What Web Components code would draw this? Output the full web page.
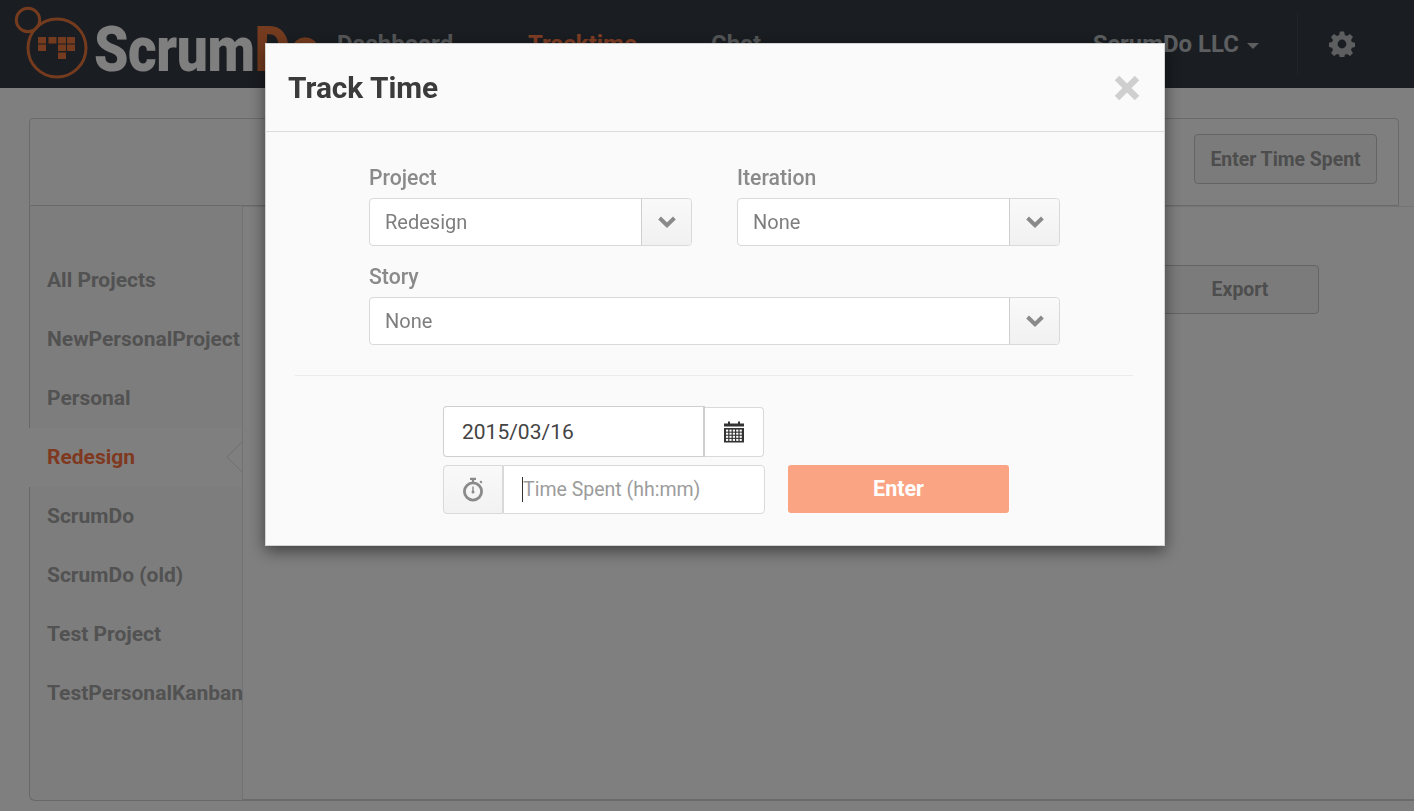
<!DOCTYPE html>
<html lang="en"><head><meta charset="utf-8"><title>ScrumDo Track Time</title>
<style>
html,body{margin:0;padding:0;height:100%;overflow:hidden;background:#fff;font-family:Roboto,"Liberation Sans",sans-serif}
</style></head><body>
<sd-app>
  <sd-header></sd-header>
  <sd-page>
    <sd-toolbar><sd-button style="--w:183px;--h:50px">Enter Time Spent</sd-button></sd-toolbar>
    <sd-split>
      <sd-sidebar></sd-sidebar>
      <sd-main><sd-button style="--w:158px;--h:49px">Export</sd-button></sd-main>
    </sd-split>
  </sd-page>
</sd-app>
<sd-modal></sd-modal>
<script>
function def(name, html){
  customElements.define(name, class extends HTMLElement{
    constructor(){super();this.attachShadow({mode:'open'}).innerHTML=html;}
  });
}
const chev='<svg width="20" height="14" viewBox="0 0 20 14"><path d="M2.6 3 10 10.2 17.4 3" fill="none" stroke="currentColor" stroke-width="4"/></svg>';
const blocks=[[24,33],[34.5,33],[44,33],[53,33],[24,40.5],[44,40.5],[53,40.5],[44,48.5]].map(([x,y])=>`<rect x="${x}" y="${y}" width="8" height="6.5"/>`).join('');
let cells='';
for(let r=0;r<4;r++)for(let c=0;c<5;c++)cells+=`<rect x="${2+c*3.4}" y="${8.6+r*3.1}" width="2.2" height="2"/>`;

def('sd-app',`<style>:host{display:flex;flex-direction:column;height:811px;background:#fff}</style><slot></slot>`);

def('sd-header',`<style>
:host{display:flex;align-items:center;height:88px;background:#343a42;flex:none;font-weight:700;color:#a8abaf;font-size:24px}
.logo{display:flex;align-items:center;flex:none;width:337px;position:relative}
svg.mark{display:block;margin-left:14px;flex:none}
.word{display:inline-block;font-size:63px;line-height:88px;font-weight:900;color:#fff;transform:translateY(6px) scaleX(.875);transform-origin:0 50%;margin-left:4px;white-space:nowrap;letter-spacing:-.5px}
.word b{color:#e8763c;font-weight:900}
nav{display:flex;flex:1}
nav span{display:block}
.n1{width:191px}.n2{width:183px;color:#ff7a48}
.org{margin-left:auto;display:flex;align-items:center;gap:8px;color:#b9bcc0}
.caret{width:0;height:0;border:6px solid transparent;border-top-color:#b9bcc0;border-bottom:0;margin-top:3px}
.div{width:1px;height:60px;background:#454a50;margin-left:38px}
.gear{margin:0 59px 0 31px;display:block;color:#b9bcc0}
</style>
<div class="logo">
<svg class="mark" width="76" height="80" viewBox="0 0 76 80">
 <g fill="none" stroke="#e8763c" stroke-width="3">
  <circle cx="14" cy="16" r="11.7"/>
  <circle cx="43" cy="44" r="29"/>
 </g>
 <g fill="#e8763c">${blocks}</g>
</svg>
<span class="word">Scrum<b>Do</b></span></div>
<nav><span class="n1">Dashboard</span><span class="n2">Tracktime</span><span>Chat</span></nav>
<div class="org">ScrumDo LLC<i class="caret"></i></div>
<div class="div"></div>
<svg class="gear" width="26" height="26" viewBox="0 0 26 26"><path fill="currentColor" fill-rule="evenodd" d="M10.9 0.5h4.2l.7 3.5 2.2.9 3-2 3 3-2 3 .9 2.2 3.5.7v4.2l-3.5.7-.9 2.2 2 3-3 3-3-2-2.2.9-.7 3.5h-4.2l-.7-3.5-2.2-.9-3 2-3-3 2-3-.9-2.2-3.5-.7v-4.2l3.5-.7.9-2.2-2-3 3-3 3 2 2.2-.9zM13 8.6a4.4 4.4 0 1 0 0 8.8 4.4 4.4 0 0 0 0-8.8z"/></svg>`);

def('sd-page',`<style>:host{display:flex;flex-direction:column;flex:1;padding:30px 15px 10px 29px;min-height:0}</style><slot></slot>`);
def('sd-toolbar',`<style>:host{display:flex;align-items:flex-start;justify-content:flex-end;flex:none;border:1px solid #d4d4d4;border-radius:4px 4px 0 0;padding:15px 21px 0 0;box-sizing:content-box;height:71px}</style><slot></slot>`);
def('sd-split',`<style>:host{display:flex;flex:1;min-height:0;margin-right:-15px}</style><slot></slot>`);
def('sd-main',`<style>:host{display:flex;justify-content:flex-end;align-items:flex-start;flex:1;border-top:1px solid #e8e8e8;border-bottom:2px solid #d4d4d4;border-left:1px solid #e4e4e4;padding:58px 95px 0 0}</style><slot></slot>`);
def('sd-button',`<style>:host{display:inline-flex;align-items:center;justify-content:center;width:var(--w);height:var(--h);box-sizing:border-box;border:1px solid #c8c8c8;border-radius:4px;background:#f6f6f6;color:#9a9a9a;font-weight:700;font-size:19.4px;white-space:nowrap}</style><slot></slot>`);

def('sd-sidebar',`<style>
:host{display:block;width:212px;flex:none;border-left:1px solid #cfcfcf;border-bottom:1px solid #cfcfcf;border-radius:0 0 0 6px;padding-top:45px;font-size:21px;font-weight:700;color:#a4a4a4;box-sizing:content-box;background:#fbfbfb}
div{height:59px;line-height:59px;padding-left:17px;white-space:nowrap;position:relative}
.on{color:#ff7342;background:#fff;margin-left:-1px;padding-left:18px}
svg{position:absolute;right:0;top:14px}
</style>
<div>All Projects</div><div>NewPersonalProject</div><div>Personal</div>
<div class="on">Redesign<svg width="16" height="30" viewBox="0 0 16 30"><path d="M16 0 1 15 16 30z" fill="#fff"/><path d="M16 0 1 15 16 30" fill="none" stroke="#e0e0e0"/></svg></div>
<div>ScrumDo</div><div>ScrumDo (old)</div><div>Test Project</div><div>TestPersonalKanban</div>`);

def('sd-select',`<style>
:host{display:flex;height:48px;box-sizing:border-box;border:1px solid #d9d9d9;border-radius:4px;background:#fff;color:#7e7e7e;font-size:20px}
.v{flex:1;line-height:46px;padding-left:15px}
.t{width:49px;flex:none;border-left:1px solid #cfcfcf;display:flex;align-items:center;justify-content:center;color:#8a8a8a;background:linear-gradient(#f9f9f9,#f1f1f1);border-radius:0 4px 4px 0}
svg{display:block}
</style><div class="v"><slot></slot></div><div class="t">${chev}</div>`);

def('sd-modal',`<style>
:host{position:fixed;inset:0;background:rgba(0,0,0,.5);display:block;font-family:Roboto,"Liberation Sans",sans-serif}
.dlg{position:absolute;left:265px;top:43px;width:900px;height:503px;box-sizing:border-box;background:#fafafa;box-shadow:inset 0 0 0 1px #d4d4d4,0 5px 15px rgba(0,0,0,.5);display:flex;flex-direction:column}
.hd{height:87px;flex:none;border-bottom:1px solid #dcdcdc;display:flex;align-items:center;justify-content:space-between;padding:1px 25px 0 23px}
h1{margin:0;font-size:29.8px;font-weight:700;color:#3b3b3b}
.x{display:block}
.bd{padding:33px 105px 0 104px;flex:1}
label{display:block;color:#8a8a8a;font-size:21.2px;font-weight:500;line-height:26px;height:26px;margin-bottom:7px}
.row{display:flex;gap:45px;height:73px}
.row>div{width:323px}
.st{margin-top:26px}
hr{border:0;border-top:1px solid #ebebeb;margin:30px -73px 0 -74px}
.dt{display:flex;margin:30px 0 0 74px;width:321px;height:51px}
.in{flex:1;border:1px solid #cfcfcf;border-right-width:2px;border-radius:4px 0 0 4px;background:#fff;font-size:21px;color:#444;line-height:50px;padding-left:18px;box-sizing:border-box}
.cal{width:59px;height:50px;margin-top:1px;box-sizing:border-box;border:1px solid #d9d9d9;border-left:0;border-radius:0 4px 4px 0;background:#fff;display:flex;align-items:center;justify-content:center}
.tm{display:flex;margin:8px 0 0 74px;align-items:flex-start}
.add{width:60px;height:49px;box-sizing:border-box;border:1px solid #d9d9d9;border-radius:4px 0 0 4px;background:linear-gradient(#f9f9f9,#f2f2f2);display:flex;align-items:center;justify-content:center}
.ph{width:262px;height:49px;box-sizing:border-box;border:1px solid #d9d9d9;border-radius:0 4px 4px 0;background:#fff;color:#9c9c9c;font-size:19.5px;line-height:47px;padding-left:19px;position:relative;white-space:nowrap}
.ph::before{content:"";position:absolute;left:18px;top:11px;width:1px;height:25px;background:#333}
.go{margin-left:23px;width:221px;height:48px;background:#faa484;color:#fff;font-weight:700;font-size:21.5px;text-align:center;line-height:47px;border-radius:3px}
</style>
<div class="dlg">
 <div class="hd"><h1>Track Time</h1>
  <svg class="x" width="26" height="26" viewBox="0 0 26 26"><path d="M3 3 23 23M23 3 3 23" stroke="#cfcfcf" stroke-width="6.4" fill="none"/></svg></div>
 <div class="bd">
  <div class="row"><div><label>Project</label><sd-select>Redesign</sd-select></div><div><label>Iteration</label><sd-select>None</sd-select></div></div>
  <div class="st"><label>Story</label><sd-select>None</sd-select></div>
  <hr>
  <div class="dt"><div class="in">2015/03/16</div><div class="cal">
   <svg width="20" height="22" viewBox="0 0 20 22"><path fill="#333" d="M0 2.5h4V0.5h2v2h8V0.5h2v2h4v3H0zM0 7h20v14.5H0z"/><g fill="#fff">${cells}</g></svg>
  </div></div>
  <div class="tm"><div class="add">
   <svg width="22" height="25" viewBox="0 0 22 25"><g fill="none" stroke="#8a8a8a"><circle cx="11" cy="14.5" r="8.6" stroke-width="2.8"/><path d="M8 1.8h6M11 1.8v3.6" stroke-width="2.2"/><path d="M18.2 4.2 19.8 5.8" stroke-width="2.2"/><path d="M11 9.5v5M7 14.5h.01M15 14.5h.01M11 19h.01" stroke-width="1.4"/></g><circle cx="11" cy="15" r="1.5" fill="#8a8a8a"/></svg>
  </div><div class="ph">Time Spent (hh:mm)</div><div class="go">Enter</div></div>
 </div>
</div>`);
</script>
</body></html>
